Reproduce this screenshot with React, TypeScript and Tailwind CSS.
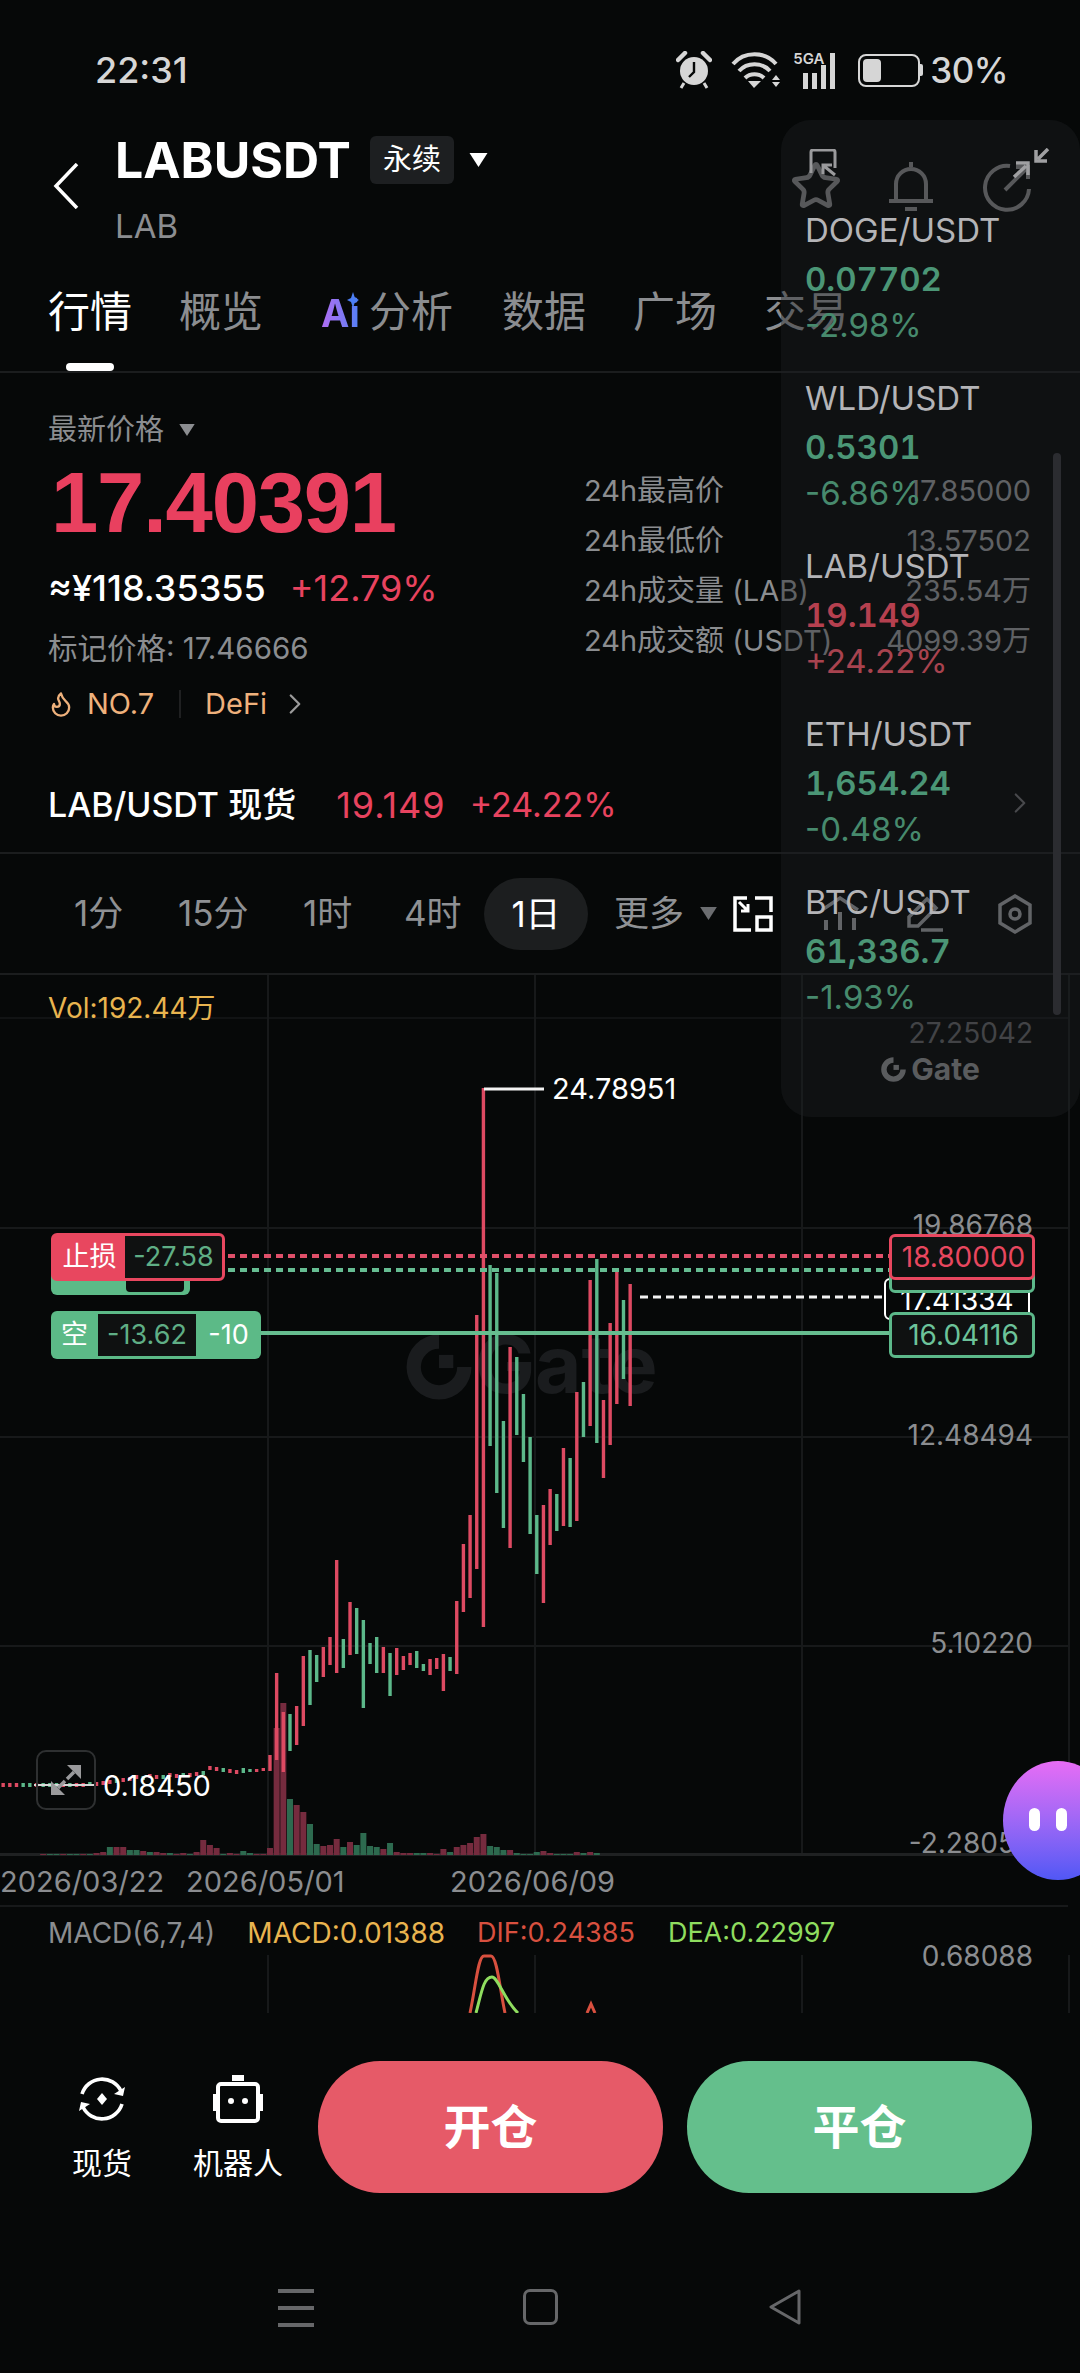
import React from "react";
import { Star, Flame, ChevronRight } from "lucide-react";

type C = "r" | "g";

// top, bottom, colour: one entry per candle, 6.67px apart from x=243.3
const candles: [number, number, C][] = [
  [1768, 1773, "g"], [1769, 1772, "g"], [1769, 1772, "r"], [1768, 1771, "r"], [1755, 1771, "r"],
  [1673, 1760, "r"], [1712, 1772, "r"], [1714, 1751, "g"], [1706, 1745, "r"], [1656, 1726, "r"],
  [1650, 1705, "g"], [1655, 1682, "g"], [1647, 1677, "r"], [1637, 1665, "r"], [1560, 1673, "r"],
  [1639, 1668, "g"], [1602, 1655, "r"], [1608, 1654, "g"], [1620, 1708, "g"], [1643, 1664, "g"],
  [1637, 1673, "g"], [1647, 1673, "r"], [1653, 1696, "g"], [1648, 1675, "r"], [1656, 1670, "r"],
  [1653, 1665, "r"], [1651, 1668, "g"], [1664, 1671, "g"], [1659, 1675, "r"], [1658, 1669, "r"],
  [1654, 1691, "r"], [1657, 1671, "g"], [1601, 1674, "r"], [1544, 1612, "r"], [1515, 1598, "r"],
  [1315, 1569, "r"], [1088, 1627, "r"], [1265, 1446, "g"], [1273, 1493, "g"], [1421, 1528, "g"],
  [1347, 1548, "r"], [1357, 1435, "g"], [1394, 1462, "g"], [1437, 1534, "g"], [1515, 1574, "g"],
  [1505, 1603, "r"], [1489, 1545, "r"], [1494, 1531, "g"], [1448, 1526, "r"], [1458, 1527, "g"],
  [1392, 1521, "r"], [1382, 1437, "g"], [1280, 1426, "r"], [1259, 1443, "g"], [1400, 1478, "r"],
  [1323, 1445, "r"], [1269, 1404, "r"], [1300, 1379, "g"], [1284, 1406, "r"],
];

// flat part left of the candles, walking left from x=236.6
const tail: [number, C][] = [
  [1770, "r"], [1769, "r"], [1768, "g"], [1767, "r"], [1766, "r"], [1771, "g"], [1772, "r"], [1773, "r"],
  [1773, "g"], [1774, "r"], [1773, "r"], [1775, "g"], [1775, "r"], [1774, "r"], [1776, "g"], [1775, "r"],
  [1777, "r"], [1778, "r"], [1779, "g"], [1780, "r"], [1781, "r"], [1782, "r"], [1782, "g"], [1783, "r"],
  [1783, "r"], [1783, "g"], [1783, "r"], [1783, "g"], [1783, "g"], [1783, "g"], [1783, "r"], [1783, "g"],
  [1783, "g"], [1783, "r"], [1783, "r"], [1783, "r"],
];

// volume heights, same x as the candles
const volumes: [number, C][] = [
  [4, "g"], [2, "g"], [1, "r"], [1, "r"], [7, "r"], [127, "r"], [152, "r"], [56, "g"], [50, "r"], [43, "r"],
  [31, "g"], [11, "g"], [9, "r"], [10, "r"], [16, "r"], [8, "g"], [13, "r"], [10, "g"], [22, "g"], [9, "g"],
  [8, "g"], [6, "r"], [12, "g"], [3, "r"], [2, "r"], [2, "r"], [2, "g"], [2, "g"], [2, "r"], [1, "r"],
  [6, "r"], [3, "g"], [8, "r"], [10, "r"], [12, "r"], [18, "r"], [21, "r"], [9, "g"], [8, "g"], [5, "g"],
  [5, "r"], [2, "g"], [1, "g"], [1, "g"], [3, "g"], [4, "r"], [2, "r"], [1, "g"], [1, "g"], [1, "g"],
  [3, "r"], [2, "g"], [3, "r"], [2, "g"],
];

const tailVolumes: [number, C][] = [
  [1, "r"], [2, "r"], [1, "g"], [7, "r"], [10, "r"], [15, "r"], [3, "r"], [1, "g"], [2, "r"], [1, "r"],
  [2, "g"], [2, "r"], [3, "r"], [3, "g"], [4, "r"], [5, "g"], [5, "g"], [8, "r"], [8, "r"], [8, "g"],
  [3, "r"], [2, "r"], [1, "g"], [1, "r"], [1, "g"], [1, "g"], [1, "r"], [1, "g"], [1, "g"], [1, "r"],
];

const pairs = [
  { name: "DOGE/USDT", price: "0.07702", change: "-2.98%", up: false },
  { name: "WLD/USDT", price: "0.5301", change: "-6.86%", up: false },
  { name: "LAB/USDT", price: "19.149", change: "+24.22%", up: true },
  { name: "ETH/USDT", price: "1,654.24", change: "-0.48%", up: false },
  { name: "BTC/USDT", price: "61,336.7", change: "-1.93%", up: false },
];

const stats = [
  ["24h最高价", "17.85000"],
  ["24h最低价", "13.57502"],
  ["24h成交量 (LAB)", "235.54万"],
  ["24h成交额 (USDT)", "4099.39万"],
];

function Caret({ className }: { className: string }) {
  return (
    <svg viewBox="0 0 20 14" className={className}>
      <path d="M1 0h18L10 14z" fill="currentColor" />
    </svg>
  );
}

function GateMark({ className }: { className: string }) {
  return (
    <svg viewBox="0 0 60 60" className={className}>
      <path d="M30 7A23 23 0 1 0 53 30" fill="none" stroke="currentColor" strokeWidth="13" />
      <rect x="30" y="19" width="13" height="12" fill="currentColor" />
    </svg>
  );
}

function StatusIcons() {
  return (
    <div className="flex items-center text-[#d6d6d6]">
      <svg viewBox="0 0 36 38" className="w-[36px] h-[38px]">
        <circle cx="18" cy="20" r="14" fill="currentColor" />
        <path d="M18 11v10l-5 5" fill="none" stroke="#060808" strokeWidth="2.4" />
        <path d="M2 9 9 2M34 9 27 2" stroke="currentColor" strokeWidth="4.5" strokeLinecap="round" />
        <path d="M8 32 5 37M28 32l3 5" stroke="currentColor" strokeWidth="3" />
      </svg>
      <svg viewBox="0 0 50 38" className="w-[50px] h-[38px] ml-[19px]">
        <path d="M2 13C13 0 34 0 45 13M8 20c8-9 23-9 31 0M14 27c5-5 14-5 19 0" fill="none" stroke="currentColor" strokeWidth="4" />
        <path d="M23 37 17 30h13z" fill="currentColor" />
        <path d="M45 24l4 5h-8zM45 36l4-5h-8z" fill="currentColor" />
      </svg>
      <div className="relative w-[50px] h-[38px] ml-[12px]">
        <span className="absolute left-0 top-0 text-[15px] leading-[16px] font-semibold">5GA</span>
        <div className="absolute left-[10px] bottom-0 flex items-end gap-[4px]">
          <div className="w-[5px] h-[16px] bg-[#d6d6d6]" />
          <div className="w-[5px] h-[16px] bg-[#d6d6d6]" />
          <div className="w-[5px] h-[24px] bg-[#d6d6d6]" />
          <div className="w-[5px] h-[36px] bg-[#d6d6d6]" />
        </div>
      </div>
      <div className="flex items-center ml-[15px]">
        <div className="w-[62px] h-[33px] rounded-[8px] border-2 border-[#d6d6d6] p-[3px]">
          <div className="w-[18px] h-full rounded-[4px] bg-[#d6d6d6]" />
        </div>
        <div className="w-[3px] h-[12px] rounded-r-[2px] bg-[#d6d6d6]" />
      </div>
      <span className="ml-[7px] text-[35px] font-medium leading-[40px] tracking-[-0.5px]">30%</span>
    </div>
  );
}

function HeaderIcons() {
  return (
    <div className="flex items-end text-[#7d7d7f] absolute left-[790px] top-[24px]">
      <Star className="w-[52px] h-[52px]" strokeWidth={2.2} />
      <svg viewBox="0 0 44 50" className="w-[44px] h-[50px] ml-[47px]">
        <path d="M22 0v5M7 38V22a15 15 0 0 1 30 0v16M0 39h44M16 47h12" fill="none" stroke="currentColor" strokeWidth="4" />
      </svg>
      <svg viewBox="0 0 50 50" className="w-[50px] h-[50px] ml-[50px]">
        <path d="M27 4A22 22 0 1 0 46 27" fill="none" stroke="currentColor" strokeWidth="4" />
        <path d="M22 28 43 7M33 5h12v12" fill="none" stroke="currentColor" strokeWidth="4" />
      </svg>
    </div>
  );
}

function Chart() {
  const red = "#dd4a62";
  const green = "#5cb88a";
  const volRed = "#752b3e";
  const volGreen = "#2d6a4f";
  return (
    <svg viewBox="0 975 1080 1038" className="absolute inset-0 w-full h-full">
      {/* grid */}
      <rect x="0" y="1017" width="1068" height="2" fill="#111314" />
      {[1227, 1436, 1645].map((y) => (
        <rect key={y} x="0" y={y} width="1068" height="2" fill="#17191a" />
      ))}
      {[267, 534, 801, 1068].map((x) => (
        <React.Fragment key={x}>
          <rect x={x} y="975" width="2" height="879" fill="#17191a" />
          <rect x={x} y="1955" width="2" height="58" fill="#17191a" />
        </React.Fragment>
      ))}
      <rect x="0" y="1853" width="1068" height="3" fill="#1f2122" />
      <rect x="0" y="1905" width="1068" height="2" fill="#17191a" />

      {/* watermark */}
      <g className="text-[#1a1c1e]">
        <svg x="406" y="1334" width="66" height="66" viewBox="0 0 60 60">
          <path d="M30 7A23 23 0 1 0 53 30" fill="none" stroke="currentColor" strokeWidth="13" />
          <rect x="30" y="19" width="13" height="12" fill="currentColor" />
        </svg>
        <text x="475" y="1393" fontSize="80" fontWeight="700" fontFamily="Inter" fill="currentColor">Gate</text>
      </g>

      {/* volume */}
      {tailVolumes.map(([h, c], i) => (
        <rect key={i} x={236.6 - i * 6.67 - 3} y={1855 - h} width="6" height={h} fill={c === "r" ? volRed : volGreen} />
      ))}
      {volumes.map(([h, c], i) => (
        <rect key={i} x={243.3 + i * 6.67 - 3} y={1855 - h} width="6" height={h} fill={c === "r" ? volRed : volGreen} />
      ))}

      {/* candles */}
      {tail.map(([y, c], i) => (
        <rect key={i} x={236.6 - i * 6.67 - 1.7} y={y} width="3.4" height="4" fill={c === "r" ? red : green} />
      ))}
      {candles.map(([top, bottom, c], i) => (
        <rect key={i} x={243.3 + i * 6.67 - 1.7} y={top} width="3.4" height={bottom - top} fill={c === "r" ? red : green} />
      ))}

      {/* order lines */}
      <path d="M228 1256H889" stroke="#e0506a" strokeWidth="4" strokeDasharray="7 5" />
      <path d="M228 1270H889" stroke="#66bd92" strokeWidth="4" strokeDasharray="7 5" />
      <path d="M640 1297H884" stroke="#f2f2f2" strokeWidth="3" strokeDasharray="8 5" />
      <path d="M261 1333H889" stroke="#66bd8f" strokeWidth="4" />

      {/* high / low markers */}
      <path d="M484 1089H544" stroke="#f2f2f2" strokeWidth="3" />
      <path d="M34 1785H95" stroke="#d8d8d8" strokeWidth="2" />

      {/* MACD */}
      <path d="M470 2013C476 1985 478 1956 484 1956H491C497 1956 500 1990 505 2013" fill="none" stroke="#d8503f" strokeWidth="3" />
      <path d="M476 2013C482 1990 484 1977 492 1977C498 1977 504 2000 518 2013" fill="none" stroke="#8fdd5f" strokeWidth="3" />
      <path d="M587 2013 591 2004 595 2013" fill="none" stroke="#d8503f" strokeWidth="3" />
    </svg>
  );
}

function FloatingList() {
  return (
    <div className="absolute left-[781px] top-[120px] w-[299px] h-[997px] rounded-[30px] bg-[#1f2124]/40">
      {/* window controls */}
      <svg viewBox="0 0 30 28" className="absolute left-[27px] top-[29px] w-[30px] h-[28px] text-[#9a9a9c]">
        <path d="M3 24V3a2 2 0 0 1 2-2h20a2 2 0 0 1 2 2v16" fill="none" stroke="currentColor" strokeWidth="3" />
        <path d="M27 26 16 17M15 25v-9h9" fill="none" stroke="currentColor" strokeWidth="3" />
      </svg>
      <svg viewBox="0 0 38 30" className="absolute left-[231px] top-[28px] w-[38px] h-[30px] text-[#a0a0a2]">
        <path d="M36 1 26 11M24 2v11h11" fill="none" stroke="currentColor" strokeWidth="3.5" />
        <path d="M2 29 14 18M4 15h12v12" fill="none" stroke="currentColor" strokeWidth="3.5" />
      </svg>

      <div className="pt-[90px] pl-[24px]">
        {pairs.map((p) => (
          <div key={p.name} className="h-[168px] text-[33px] leading-[40px]">
            <div className="text-[#b4b4b7]">{p.name}</div>
            <div className={`mt-[9px] font-semibold tabular-nums ${p.up ? "text-[#b5404f]" : "text-[#4b9676]"}`}>{p.price}</div>
            <div className={`mt-[6px] ${p.up ? "text-[#a8434f]" : "text-[#478a6d]"}`}>{p.change}</div>
          </div>
        ))}
      </div>
      <div className="-mt-px flex items-center justify-center gap-[5px] text-[#5a5c5e] h-[40px]">
        <GateMark className="w-[25px] h-[25px]" />
        <span className="text-[30px] font-bold leading-[40px]">Gate</span>
      </div>

      <div className="absolute left-[272px] top-[333px] w-[8px] h-[562px] rounded-full bg-[#2b2c30]" />
      <ChevronRight className="absolute left-[222px] top-[664px] w-[34px] h-[38px] text-[#48494c]" strokeWidth={1.5} />
    </div>
  );
}

export default function App() {
  return (
    <div className="relative w-[1080px] h-[2373px] overflow-hidden bg-[#060808] text-[#8b8d90] font-['Inter','Noto_Sans_CJK_SC',sans-serif]">
      {/* Status bar */}
      <div className="h-[136px] pt-[4px] pl-[95px] pr-[72px] flex items-center justify-between">
        <span className="text-[36px] font-medium leading-[40px] text-[#d6d6d6]">22:31</span>
        <StatusIcons />
      </div>

      {/* Header */}
      <div className="relative h-[134px] flex">
        <svg viewBox="0 0 26 46" className="ml-[53px] mt-[27px] w-[26px] h-[46px] text-white">
          <path d="M24 1 3 23l21 22" fill="none" stroke="currentColor" strokeWidth="3.5" />
        </svg>
        <div className="ml-[36px]">
          <div className="flex items-center h-[48px]">
            <span className="text-[50px] font-bold leading-[48px] text-white">LABUSDT</span>
            <span className="ml-[19px] w-[84px] h-[48px] rounded-[6px] bg-[#1d1f21] text-white text-[29px] leading-[48px] text-center">永续</span>
            <Caret className="ml-[14px] w-[21px] h-[14px] text-white" />
          </div>
          <div className="mt-[24px] text-[33px] leading-[36px]">LAB</div>
        </div>
        <HeaderIcons />
      </div>

      {/* Tabs */}
      <div className="h-[103px] border-b-2 border-[#1b1d1e] flex pl-[48px] gap-[47px] text-[42px] leading-[84px]">
        <div className="flex flex-col items-center text-white">
          <span className="h-[84px]">行情</span>
          <div className="mt-[9px] w-[48px] h-[8px] rounded-full bg-white" />
        </div>
        <span>概览</span>
        <span className="flex ml-[11px] mr-[2px]">
          <span className="relative w-[48px]">
            <span className="font-bold text-[38px] bg-gradient-to-r from-[#b06cf2] to-[#4c7ff5] bg-clip-text text-transparent">Ai</span>
            <svg viewBox="0 0 12 16" className="absolute left-[26px] top-[22px] w-[12px] h-[16px]">
              <path d="M6 0l2 6 4 2-4 2-2 6-2-6-4-2 4-2z" fill="#4c7ff5" />
            </svg>
          </span>
          <span>分析</span>
        </span>
        <span>数据</span>
        <span>广场</span>
        <span>交易</span>
      </div>

      {/* Price block */}
      <div className="h-[351px] flex">
        <div className="w-[584px] pl-[48px] pt-[37px]">
          <div className="flex items-center h-[40px] text-[29px]">
            <span>最新价格</span>
            <Caret className="ml-[14px] w-[18px] h-[12px]" />
          </div>
          <div className="mt-[11px] h-[84px] pl-[3px] font-['Liberation_Sans',sans-serif] font-bold text-[85px] leading-[84px] tracking-[-1.2px] text-[#e9405f]">17.40391</div>
          <div className="mt-[23px] h-[40px] flex items-center text-[36px]">
            <span className="font-medium text-white">≈¥118.35355</span>
            <span className="ml-[24px] text-[#e8435f]">+12.79%</span>
          </div>
          <div className="mt-[20px] h-[40px] text-[29.5px] leading-[40px]">标记价格: 17.46666</div>
          <div className="mt-[16px] h-[40px] flex items-center text-[29px] text-[#eeb17c]">
            <Flame className="w-[28px] h-[30px] ml-[-1px]" strokeWidth={2} />
            <span className="ml-[12px]">NO.7</span>
            <div className="ml-[25px] w-[2px] h-[28px] bg-[#1f2021]" />
            <span className="ml-[24px]">DeFi</span>
            <ChevronRight className="ml-[11px] w-[34px] h-[38px] text-[#9a9a9a]" strokeWidth={1.6} />
          </div>
        </div>
        <div className="w-[447px] pt-[93px] text-[29px] leading-[50px]">
          {stats.map(([label, value]) => (
            <div key={label} className="h-[50px] flex justify-between">
              <span>{label}</span>
              <span>{value}</span>
            </div>
          ))}
        </div>
      </div>

      {/* Spot row */}
      <div className="h-[130px] border-b-2 border-[#1b1d1e] pt-[57px] pl-[48px] flex text-[36px] leading-[48px]">
        <span className="font-medium text-white text-[34px]">LAB/USDT 现货</span>
        <span className="ml-[40px] text-[#e8435f] tracking-[1px]">19.149</span>
        <span className="ml-[24px] text-[#e8435f] text-[34px]">+24.22%</span>
      </div>

      {/* Timeframes */}
      <div className="h-[121px] border-b-2 border-[#1b1d1e] flex items-center pl-[74px] text-[35px] text-[#8f9194] whitespace-nowrap">
        <span className="w-[53px] shrink-0">1分</span>
        <span className="ml-[51px] w-[72px] shrink-0">15分</span>
        <span className="ml-[53px] w-[53px] shrink-0">1时</span>
        <span className="ml-[48px] w-[53px] shrink-0">4时</span>
        <span className="ml-[27px] w-[104px] h-[72px] shrink-0 rounded-full bg-[#1c1e1f] text-white text-center leading-[72px]">1日</span>
        <span className="ml-[26px] w-[68px] shrink-0">更多</span>
        <Caret className="ml-[17px] w-[19px] h-[13px] shrink-0 text-[#6b6d70]" />
        <svg viewBox="0 0 40 36" className="ml-[15px] w-[40px] h-[36px] shrink-0 text-white">
          <path d="M22 2H38V16M2 14V2H14M2 14V34H18" fill="none" stroke="currentColor" strokeWidth="3.5" />
          <rect x="24" y="21" width="14" height="13" fill="none" stroke="currentColor" strokeWidth="3.5" />
          <path d="M6 6 15 15M15 8V15H8" fill="none" stroke="currentColor" strokeWidth="3" />
        </svg>
        <svg viewBox="0 0 40 36" className="ml-[47px] w-[40px] h-[36px] shrink-0 text-[#8f9194]">
          <path d="M2 14 20 2 38 14" fill="none" stroke="currentColor" strokeWidth="3.5" />
          <path d="M6 24v10M20 16v18M34 22v12" stroke="currentColor" strokeWidth="4" />
        </svg>
        <svg viewBox="0 0 40 36" className="ml-[45px] w-[40px] h-[36px] shrink-0 text-[#8f9194]">
          <path d="M4 30V21L22 3l9 9-18 18zM16 34H38" fill="none" stroke="currentColor" strokeWidth="3.5" />
        </svg>
        <svg viewBox="0 0 36 40" className="ml-[52px] w-[36px] h-[40px] shrink-0 text-[#8f9194]">
          <path d="M18 2 33 11V29L18 38 3 29V11z" fill="none" stroke="currentColor" strokeWidth="3.5" />
          <circle cx="18" cy="20" r="5" fill="none" stroke="currentColor" strokeWidth="3.5" />
        </svg>
      </div>

      {/* Chart */}
      <div className="relative h-[1038px] text-[28px] leading-[40px]">
        <Chart />
        <span className="absolute left-[48px] top-[13px] text-[#e9b44f]">Vol:192.44万</span>
        <span className="absolute left-[552px] top-[94px] text-[29px] text-white">24.78951</span>
        <span className="absolute left-[103px] top-[791px] text-[29px] text-white">0.18450</span>

        <span className="absolute right-[47px] top-[38px] text-[#5a5b5e]">27.25042</span>
        <span className="absolute right-[47px] top-[230px]">19.86768</span>
        <span className="absolute right-[47px] top-[440px]">12.48494</span>
        <span className="absolute right-[47px] top-[648px]">5.10220</span>
        <span className="absolute right-[47px] top-[848px]">-2.28054</span>
        <span className="absolute right-[47px] top-[961px]">0.68088</span>

        <span className="absolute left-0 top-[887px] text-[29px]">2026/03/22</span>
        <span className="absolute left-[186px] top-[887px] text-[29px]">2026/05/01</span>
        <span className="absolute left-[450px] top-[887px] text-[29px]">2026/06/09</span>

        <div className="absolute left-[48px] top-[938px] flex">
          <span>MACD(6,7,4)</span>
          <span className="ml-[32px] text-[#e9b44f]">MACD:0.01388</span>
          <span className="ml-[32px] text-[27px] text-[#d8503f]">DIF:0.24385</span>
          <span className="ml-[33px] text-[27px] text-[#8fdd5f]">DEA:0.22997</span>
        </div>

        {/* Order tags, left */}
        <div className="absolute left-[51px] top-[295px] w-[139px] h-[25px] rounded-b-[6px] bg-[#5cba87] pl-[75px] pr-[3px] pb-[3px]">
          <div className="h-full bg-[#0b0d0d] rounded-b-[4px] w-[58px]" />
        </div>
        <div className="absolute left-[51px] top-[258px] h-[48px] w-[174px] rounded-[6px] flex border-[3px] border-[#e8475f] bg-[#0f1111] text-[27px]">
          <span className="w-[71px] bg-[#e8475f] text-white text-center leading-[42px]">止损</span>
          <span className="flex-1 text-center leading-[42px] text-[#5fae85]">-27.58</span>
        </div>
        <div className="absolute left-[51px] top-[336px] h-[48px] w-[210px] rounded-[6px] flex items-center bg-[#5cba87] text-[27px]">
          <span className="w-[47px] text-white text-center">空</span>
          <span className="w-[98px] h-[42px] bg-[#0f1111] text-[#5fae85] text-center leading-[42px]">-13.62</span>
          <span className="flex-1 text-white text-center">-10</span>
        </div>

        {/* Order tags, right */}
        <div className="absolute left-[884px] top-[303px] w-[146px] h-[42px] rounded-l-[6px] border-2 border-white bg-[#060808] text-white text-center text-[28px] leading-[40px]">17.41334</div>
        <div className="absolute left-[889px] top-[290px] w-[146px] h-[28px] rounded-[6px] border-[3px] border-[#5cb88a] bg-[#0f1111]" />
        <div className="absolute left-[889px] top-[259px] w-[146px] h-[46px] rounded-[6px] border-[3px] border-[#e8475f] bg-[#0f1111] pl-[3px] text-center text-[#e8475f] leading-[40px]">18.80000</div>
        <div className="absolute left-[889px] top-[337px] w-[146px] h-[46px] rounded-[6px] border-[3px] border-[#5cb88a] bg-[#0f1111] pl-[3px] text-center text-[#6cc39a] leading-[40px]">16.04116</div>

        {/* Zoom control */}
        <div className="absolute left-[36px] top-[775px] w-[60px] h-[60px] rounded-[10px] border-2 border-[#2e3031] flex items-center justify-center text-[#9a9a9c]">
          <svg viewBox="0 0 34 34" className="w-[34px] h-[34px]">
            <path d="M32 2H18L32 16z" fill="currentColor" />
            <path d="M2 32H16L2 18z" fill="currentColor" />
            <path d="M25 9 18 16M9 25 16 18" stroke="currentColor" strokeWidth="3.5" />
          </svg>
        </div>
      </div>

      {/* Actions */}
      <div className="mt-[48px] h-[132px] flex pl-[48px]">
        <div className="w-[108px] pt-[13px] flex flex-col items-center text-white">
          <svg viewBox="0 0 50 50" className="w-[50px] h-[50px]">
            <path d="M5 20A21 21 0 0 1 44 17M45 30A21 21 0 0 1 6 33" fill="none" stroke="currentColor" strokeWidth="3.6" />
            <path d="M37 20 46 22 48 13zM13 30 4 28 2 37z" fill="currentColor" />
            <path d="M25 19l5 6-5 6-5-6z" fill="currentColor" />
          </svg>
          <span className="mt-[19px] text-[30px] leading-[40px]">现货</span>
        </div>
        <div className="ml-[28px] w-[108px] pt-[13px] flex flex-col items-center text-white">
          <svg viewBox="0 0 50 50" className="w-[50px] h-[50px]">
            <rect x="19" y="1" width="12" height="6" fill="currentColor" />
            <rect x="5" y="10" width="40" height="37" rx="3" fill="none" stroke="currentColor" strokeWidth="4" />
            <path d="M2 20v17M48 20v17" stroke="currentColor" strokeWidth="4" />
            <circle cx="18" cy="27" r="3" fill="currentColor" />
            <circle cx="32" cy="27" r="3" fill="currentColor" />
          </svg>
          <span className="mt-[19px] text-[30px] leading-[40px]">机器人</span>
        </div>
        <button className="ml-[26px] w-[345px] h-[132px] rounded-[62px/66px] bg-[#e65a68] text-white text-[47px] font-bold">开仓</button>
        <button className="ml-[24px] w-[345px] h-[132px] rounded-[62px/66px] bg-[#64bf8c] text-white text-[47px] font-bold">平仓</button>
      </div>

      {/* Navigation bar */}
      <div className="mt-[96px] h-[36px] flex pl-[278px] text-[#666769]">
        <div className="w-[36px] h-[38px] flex flex-col justify-between">
          <div className="h-[4px] bg-[#666769]" />
          <div className="h-[4px] bg-[#666769]" />
          <div className="h-[4px] bg-[#666769]" />
        </div>
        <div className="ml-[209px] w-[35px] h-[36px] rounded-[7px] border-[3px] border-[#666769]" />
        <svg viewBox="0 0 34 36" className="ml-[210px] w-[34px] h-[36px]">
          <path d="M31 2 3 18l28 16z" fill="none" stroke="currentColor" strokeWidth="3" strokeLinejoin="round" />
        </svg>
      </div>

      <FloatingList />

      {/* Assistant bubble */}
      <div className="absolute left-[1003px] top-[1761px] w-[110px] h-[119px] rounded-[50%] bg-gradient-to-b from-[#e76cf5] to-[#5057f5] flex gap-[16px] pl-[26px] pt-[47px]">
        <div className="w-[11px] h-[23px] rounded-full bg-white" />
        <div className="w-[11px] h-[23px] rounded-full bg-white" />
      </div>
    </div>
  );
}
